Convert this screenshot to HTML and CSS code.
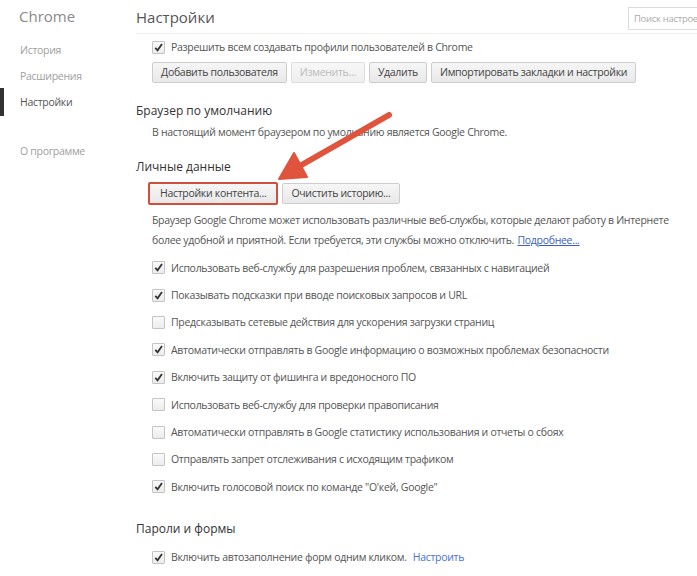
FILE: index.html
```html
<!DOCTYPE html>
<html lang="ru">
<head>
<meta charset="utf-8">
<title>Настройки</title>
<link rel="stylesheet" href="styles.css">
</head>
<body>
<div class="page">
  <aside class="sidebar">
    <div class="brand">Chrome</div>
    <nav class="nav">
      <div class="nav-item">История</div>
      <div class="nav-item">Расширения</div>
      <div class="nav-item active">Настройки</div>
      <div class="nav-item about">О программе</div>
    </nav>
  </aside>
  <main class="main">
    <header class="header">
      <h1 class="title">Настройки</h1>
      <div class="search">Поиск настроек</div>
    </header>

    <div class="row first">
      <span class="cb on"><svg viewBox="0 0 12 12"><path d="M2.5 6.3 L5 9 L9.8 2.2" /></svg></span>
      <span>Разрешить всем создавать профили пользователей в Chrome</span>
    </div>
    <div class="buttons">
      <span class="btn">Добавить пользователя</span>
      <span class="btn disabled">Изменить...</span>
      <span class="btn">Удалить</span>
      <span class="btn">Импортировать закладки и настройки</span>
    </div>

    <h2 class="section">Браузер по умолчанию</h2>
    <p class="note">В настоящий момент браузером по умолчанию является Google Chrome.</p>

    <h2 class="section personal">Личные данные</h2>
    <div class="buttons tight">
      <span class="btn marked">Настройки контента...</span>
      <span class="btn">Очистить историю...</span>
    </div>
    <p class="para">Браузер Google Chrome может использовать различные веб-службы, которые делают работу в Интернете более удобной и приятной. Если требуется, эти службы можно отключить. <a class="link" href="#">Подробнее...</a></p>

    <div class="list">
      <div class="row item"><span class="cb on"><svg viewBox="0 0 12 12"><path d="M2.5 6.3 L5 9 L9.8 2.2" /></svg></span><span>Использовать веб-службу для разрешения проблем, связанных с навигацией</span></div>
      <div class="row item"><span class="cb on"><svg viewBox="0 0 12 12"><path d="M2.5 6.3 L5 9 L9.8 2.2" /></svg></span><span>Показывать подсказки при вводе поисковых запросов и URL</span></div>
      <div class="row item"><span class="cb"></span><span>Предсказывать сетевые действия для ускорения загрузки страниц</span></div>
      <div class="row item"><span class="cb on"><svg viewBox="0 0 12 12"><path d="M2.5 6.3 L5 9 L9.8 2.2" /></svg></span><span>Автоматически отправлять в Google информацию о возможных проблемах безопасности</span></div>
      <div class="row item"><span class="cb on"><svg viewBox="0 0 12 12"><path d="M2.5 6.3 L5 9 L9.8 2.2" /></svg></span><span>Включить защиту от фишинга и вредоносного ПО</span></div>
      <div class="row item"><span class="cb"></span><span>Использовать веб-службу для проверки правописания</span></div>
      <div class="row item"><span class="cb"></span><span>Автоматически отправлять в Google статистику использования и отчеты о сбоях</span></div>
      <div class="row item"><span class="cb"></span><span>Отправлять запрет отслеживания с исходящим трафиком</span></div>
      <div class="row item"><span class="cb on"><svg viewBox="0 0 12 12"><path d="M2.5 6.3 L5 9 L9.8 2.2" /></svg></span><span>Включить голосовой поиск по команде "О'кей, Google"</span></div>
    </div>

    <h2 class="section passwords">Пароли и формы</h2>
    <div class="row item last"><span class="cb on"><svg viewBox="0 0 12 12"><path d="M2.5 6.3 L5 9 L9.8 2.2" /></svg></span><span>Включить автозаполнение форм одним кликом.</span><a class="action" href="#">Настроить</a></div>
  </main>
</div>
<svg class="arrow" width="697" height="576" viewBox="0 0 697 576">
  <line x1="389" y1="115" x2="298" y2="167" />
  <polygon points="279,179 307,177 294,153" />
</svg>
</body>
</html>
```
FILE: styles.css
```css
html, body {
  margin: 0;
  padding: 0;
  background: #fff;
  overflow: hidden;
}
body {
  width: 697px;
  height: 576px;
  font-family: "Open Sans", "Noto Sans", sans-serif;
  font-size: 10.5px;
  letter-spacing: -0.3px;
  color: #555;
}
.page {
  display: flex;
  width: 697px;
  height: 576px;
}
.sidebar {
  width: 136px;
  flex-shrink: 0;
}
.brand {
  padding-left: 19px;
  height: 33px;
  line-height: 32px;
  font-size: 15px;
  letter-spacing: 0;
  color: #8a8a8a;
}
.nav {
  display: flex;
  flex-direction: column;
  padding-top: 4px;
}
.nav-item {
  height: 26px;
  line-height: 26px;
  padding-left: 20px;
  color: #a0a0a0;
}
.nav-item.active {
  border-left: 4px solid #333;
  padding-left: 16px;
  color: #555;
  height: 28px;
  line-height: 28px;
  margin-top: -1px;
  margin-bottom: -1px;
}
.nav-item.about {
  margin-top: 23px;
}
.main {
  flex: 1;
  min-width: 0;
}
.header {
  display: flex;
  align-items: center;
  height: 33px;
  border-bottom: 1px solid #eee;
  margin-right: -20px;
}
.title {
  margin: 0;
  font-size: 15px;
  letter-spacing: 0;
  font-weight: normal;
  color: #555;
}
.search {
  margin-left: auto;
  margin-top: 3px;
  width: 82px;
  height: 21px;
  line-height: 21px;
  border: 1px solid #ddd;
  padding-left: 5px;
  font-size: 9.5px;
  color: #aaa;
  white-space: nowrap;
  overflow: hidden;
  flex-shrink: 0;
}
.row {
  display: flex;
  align-items: center;
  padding-left: 16px;
  white-space: nowrap;
}
.row.first {
  height: 20px;
  margin-top: 3px;
}
.cb {
  width: 11px;
  height: 11px;
  border: 1px solid #c4c4c4;
  border-radius: 1px;
  background: linear-gradient(#fafafa, #ececec);
  margin-right: 6px;
  flex-shrink: 0;
  display: flex;
}
.cb svg {
  width: 11px;
  height: 11px;
}
.cb path {
  fill: none;
  stroke: #333;
  stroke-width: 2;
}
.buttons {
  display: flex;
  gap: 4px;
  padding-left: 16px;
  margin-top: 5px;
}
.btn {
  height: 19px;
  line-height: 19px;
  padding: 0 8px;
  border: 1px solid #cdcdcd;
  border-radius: 2px;
  background: linear-gradient(#f6f6f6, #e8e8e8);
  color: #444;
  white-space: nowrap;
}
.btn.disabled {
  color: #bbb;
  background: linear-gradient(#f7f7f7, #efefef);
  border-color: #ddd;
}
.buttons.tight {
  padding-left: 12px;
  margin-top: 6px;
  align-items: center;
}
.btn.marked {
  border: 2px solid #cf4e3d;
  height: 19px;
  line-height: 19px;
  padding: 0 10px;
}
.section {
  margin: 19px 0 0;
  font-size: 12px;
  letter-spacing: 0;
  font-weight: normal;
  color: #333;
  height: 18px;
  line-height: 18px;
}
.section.personal {
  margin-top: 17px;
}
.section.passwords {
  margin-top: 19px;
}
.note {
  margin: 3px 0 0;
  padding-left: 16px;
  height: 18px;
  line-height: 18px;
}
.para {
  margin: 5px 0 0;
  padding-left: 16px;
  padding-right: 12px;
  line-height: 20px;
}
.link {
  display: inline-block;
  margin-left: 1px;
  color: #3a5fc0;
  text-decoration: underline;
}
.list {
  margin-top: 4px;
  display: flex;
  flex-direction: column;
}
.row.item {
  height: 27.4px;
}
.row.last {
  margin-top: 6px;
}
.action {
  color: #4a6fd0;
  text-decoration: none;
  margin-left: 6px;
}
.arrow {
  position: absolute;
  left: 0;
  top: 0;
  pointer-events: none;
}
.arrow line {
  stroke: #e0533c;
  stroke-width: 6;
  stroke-linecap: round;
}
.arrow polygon {
  fill: #e0533c;
  stroke: #e0533c;
  stroke-width: 2;
  stroke-linejoin: round;
}
```
